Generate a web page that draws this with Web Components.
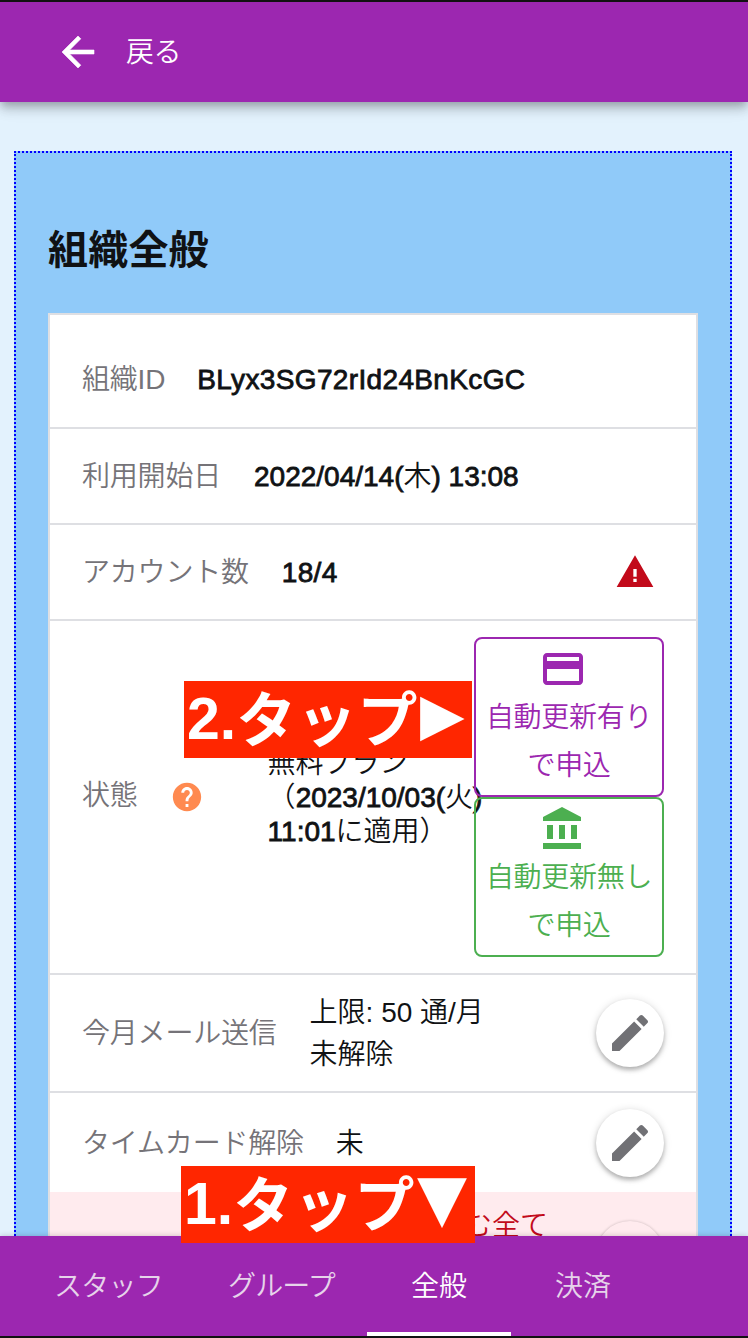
<!DOCTYPE html>
<html lang="ja">
<head>
<meta charset="utf-8">
<title>組織全般</title>
<style>
html,body{margin:0;height:100%}
body{font-family:"Liberation Sans","Noto Sans CJK JP",sans-serif;font-size:28px;font-weight:350;color:#101214;background:#e3f2fd;overflow:hidden}
</style>
</head>
<body>
<org-app></org-app>
<script>
const define = (name, html) => {
  const t = document.createElement('template');
  t.innerHTML = html;
  customElements.define(name, class extends HTMLElement {
    constructor() {
      super();
      this.attachShadow({ mode: 'open' }).append(t.content.cloneNode(true));
    }
  });
};

const ICONS = {
  back: 'M20 11H7.83l5.59-5.59L12 4l-8 8 8 8 1.41-1.41L7.83 13H20v-2z',
  warning: 'M1 21h22L12 2 1 21zm12-3h-2v-2h2v2zm0-3.2h-2v-4.6h2v4.6z',
  help: 'M12 2C6.48 2 2 6.48 2 12s4.48 10 10 10 10-4.48 10-10S17.52 2 12 2zm1 17h-2v-2h2v2zm2.07-7.75l-.9.92C13.45 12.9 13 13.5 13 15h-2v-.5c0-1.1.45-2.1 1.17-2.83l1.24-1.26c.37-.36.59-.86.59-1.41 0-1.1-.9-2-2-2s-2 .9-2 2H8c0-2.21 1.79-4 4-4s4 1.79 4 4c0 .88-.36 1.68-.93 2.25z',
  card: 'M20 4H4c-1.11 0-1.99.89-1.99 2L2 18c0 1.11.89 2 2 2h16c1.11 0 2-.89 2-2V6c0-1.11-.89-2-2-2zm0 14H4v-6h16v6zm0-10H4V6h16v2z',
  bank: 'M4 10v7h3v-7H4zm6 0v7h3v-7h-3zM2 22h19v-3H2v3zm14-12v7h3v-7h-3zm-4.5-9L2 6v2h19V6l-9.5-5z',
  edit: 'M3 17.25V21h3.75L17.81 9.94l-3.75-3.75L3 17.25zM20.71 7.04c.39-.39.39-1.02 0-1.41l-2.34-2.34c-.39-.39-1.02-.39-1.41 0l-1.83 1.83 3.75 3.75 1.83-1.83z'
};
customElements.define('md-icon', class extends HTMLElement {
  constructor() { super(); this.attachShadow({ mode: 'open' }); }
  connectedCallback() {
    this.shadowRoot.innerHTML = `<style>:host{display:block;flex:none;width:48px;height:48px}svg{display:block;width:100%;height:100%;fill:currentColor}path{stroke:currentColor;stroke-width:var(--icon-stroke,0)}</style><svg viewBox="0 0 24 24"><path d="${ICONS[this.getAttribute('name')]}"/></svg>`;
  }
});

define('app-header', `<style>
:host{display:flex;flex:none;align-items:center;box-sizing:border-box;height:102px;padding:0 54px;border-top:2px solid #111;background:#9c27b0;color:#fff;position:relative;z-index:2;box-shadow:0 4px 8px -2px rgba(0,0,0,.2),0 8px 10px rgba(0,0,0,.14),0 2px 20px rgba(0,0,0,.1)}
md-icon{--icon-stroke:.3}
span{margin-left:24px;padding-top:2px;line-height:40px;letter-spacing:-.4px}
</style><md-icon name="back"></md-icon><span><slot></slot></span>`);

define('info-panel', `<style>
:host{display:block;margin:49px 16px 0 14px;height:1300px;box-sizing:border-box;border:2px dotted #00f;background:#90caf9;padding:65px 32px}
h1{margin:0;font-size:40px;line-height:64px;font-weight:700;color:#101214;letter-spacing:.2px}
.card{margin-top:31px;background:#fff;border:2px solid #dedfe3}
</style><h1><slot name="title"></slot></h1><div class="card"><slot></slot></div>`);

define('info-row', `<style>
:host{display:flex;align-items:center;box-sizing:border-box;padding:0 32px;border-bottom:2px solid #dedfe3;height:96px}
.label{flex:none;color:#757378;line-height:40px;margin-right:var(--label-gap,33px);padding-top:2px;letter-spacing:-.2px}
.value{flex:1;min-width:0;line-height:42px;padding-top:2px}
</style><div class="label"><slot name="label"></slot></div><div class="value"><slot></slot></div><slot name="action"></slot>`);

define('strong-text', `<style>:host{display:inline;-webkit-text-stroke:.8px currentColor;font-weight:400}</style><slot></slot>`);

define('edit-fab', `<style>
:host{display:flex;flex:none;align-items:center;justify-content:center;width:68px;height:68px;border-radius:50%;background:#fff;color:#717175;box-shadow:0 3px 4px rgba(0,0,0,.24),0 1px 8px rgba(0,0,0,.14)}
</style><md-icon name="edit"></md-icon>`);

define('plan-button', `<style>
:host{display:flex;flex-direction:column;align-items:center;box-sizing:border-box;width:190px;height:160px;border:2px solid currentColor;border-radius:8px;padding-top:6px;text-align:center;line-height:48px;white-space:nowrap;letter-spacing:-.3px}
::slotted(md-icon){margin-right:12px}
div{margin-top:1px}
</style><slot name="icon"></slot><div><slot></slot></div>`);

define('tap-label', `<style>
:host{display:flex;align-items:center;box-sizing:border-box;position:absolute;z-index:3;height:77px;background:#ff2600;color:#fff;font-size:59px;font-weight:700;line-height:77px;white-space:nowrap}
</style><slot></slot>`);

define('tab-bar', `<style>
:host{display:flex;flex:none;box-sizing:border-box;height:102px;padding-left:21px;border-bottom:2px solid #111;background:#9c27b0;position:relative;z-index:2;box-shadow:0 0 6px rgba(0,0,0,.2)}
</style><slot></slot>`);

define('tab-item', `<style>
:host{display:flex;align-items:center;justify-content:center;box-sizing:border-box;width:144px;height:98px;border-bottom:4px solid transparent;color:#e6d3ea;margin-top:0;padding-bottom:0;height:100px}
:host([wide]){width:173px;padding-left:2px;letter-spacing:-.8px}
:host([selected]){color:#fff;border-color:#fff}
</style><slot></slot>`);

define('org-app', `<style>
:host{display:flex;flex-direction:column;width:748px;height:1338px;position:relative;overflow:hidden}
main{flex:1;min-height:0;overflow:hidden}
.id{letter-spacing:.35px}
.help{width:34px;height:34px;color:#ff8a50;margin-left:32px}
.statuslabel{display:flex;align-items:center;margin-top:-2px}
.statuslabel span{margin-top:-2px}
.plan{line-height:34px;margin-left:32px;width:206px;white-space:nowrap}
.buttons{height:320px;position:relative}
.warn{width:40px;height:40px;color:#c20a1a;margin-right:9px}
.step1{left:181px;top:1166px;width:294px;padding-left:3px}
.step2{left:184px;top:681px;width:288px;padding-left:3px}
.kana{font-size:60px;letter-spacing:.6px;margin-top:3px;margin-left:0}
.tri{font-family:"DejaVu Sans",sans-serif;font-weight:400;line-height:77px;display:block}
.step1 .tri{font-size:65px;margin:-15px 0 0 2px}
.step2 .tri{font-size:58px;margin:-11px 0 0 2px}
.danger{background:#ffebee;color:#c20a1a;border:0;height:130px;align-items:flex-start;--label-gap:32px}
.danger p{margin:0 0 0 350px;padding-top:11px}
.danger edit-fab{margin-top:29px;background:#ffebee;box-shadow:0 3px 4px rgba(0,0,0,.12),0 0 3px rgba(0,0,0,.2)}
</style>
<app-header>戻る</app-header>
<main>
<info-panel><span slot="title">組織全般</span>
<info-row style="height:114px;padding-top:16px;--label-gap:32px"><span slot="label">組織ID</span><strong-text class="id">BLyx3SG72rId24BnKcGC</strong-text></info-row>
<info-row><span slot="label">利用開始日</span><strong-text>2022/04/14(</strong-text>木<strong-text>) 13:08</strong-text></info-row>
<info-row><span slot="label">アカウント数</span><strong-text style="letter-spacing:.3px">18/4</strong-text><md-icon class="warn" slot="action" name="warning"></md-icon></info-row>
<info-row style="height:354px;--label-gap:32px"><span slot="label" class="statuslabel"><span>状態</span><md-icon class="help" name="help"></md-icon></span>
<div class="plan">無料プラン<br>（<strong-text>2023/10/03(</strong-text>火<strong-text>)</strong-text><br><strong-text>11:01</strong-text>に適用）</div>
<div class="buttons" slot="action">
<plan-button style="color:#9c27b0"><md-icon slot="icon" name="card"></md-icon>自動更新有り<br>で申込</plan-button>
<plan-button style="color:#4caf50"><md-icon slot="icon" name="bank"></md-icon>自動更新無し<br>で申込</plan-button>
</div></info-row>
<info-row style="height:118px"><span slot="label">今月メール送信</span>上限: 50 通/月<br>未解除<edit-fab slot="action"></edit-fab></info-row>
<info-row style="height:99px;border:0;--label-gap:32px"><span slot="label">タイムカード解除</span>未<edit-fab slot="action"></edit-fab></info-row>
<info-row class="danger"><p>む全て</p><edit-fab slot="action"></edit-fab></info-row>
</info-panel>
</main>
<tab-bar><tab-item wide>スタッフ</tab-item><tab-item wide>グループ</tab-item><tab-item selected>全般</tab-item><tab-item>決済</tab-item></tab-bar>
<tap-label class="step2">2.<span class="kana">タップ</span><span class="tri">▶</span></tap-label>
<tap-label class="step1">1.<span class="kana">タップ</span><span class="tri">▼</span></tap-label>`);
</script>
</body>
</html>
